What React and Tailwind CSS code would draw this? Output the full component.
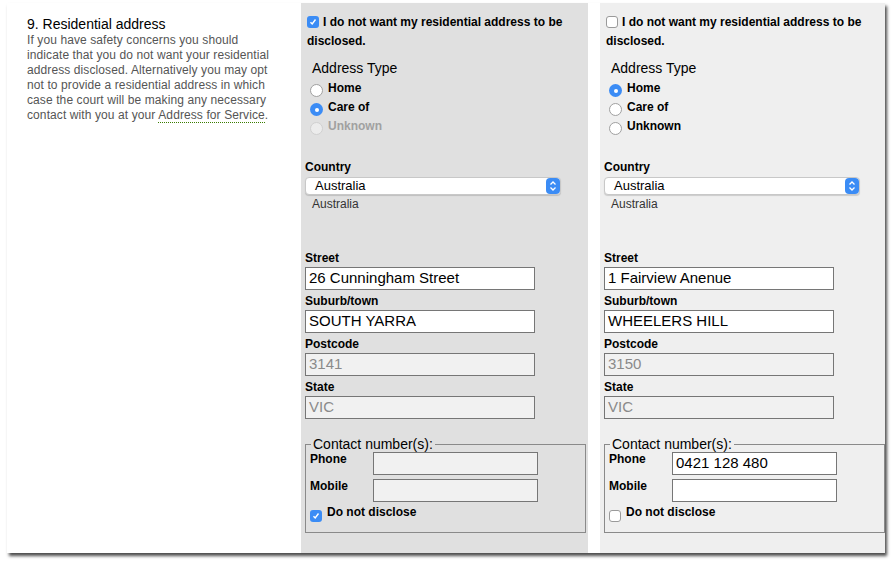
const F = { fontFamily: '"Liberation Sans", Arial, sans-serif' };

function Check({ on }) {
  return on ? (
    <span className="flex w-[12px] h-[12px] rounded-[3px] bg-[#3b8cf5] items-center justify-center shrink-0">
      <svg width="8" height="8" viewBox="0 0 8 8"><path d="M1.5 4.2 L3.2 6 L6.5 1.5" stroke="white" strokeWidth="1.4" fill="none" /></svg>
    </span>
  ) : (
    <span className="block w-[12px] h-[12px] rounded-[3px] bg-white border border-[#9a9a9a] shrink-0" />
  );
}

function Radio({ on, dim }) {
  return on ? (
    <span className="flex w-[13px] h-[13px] rounded-full bg-[#3b8cf5] items-center justify-center shrink-0">
      <span className="block w-[4px] h-[4px] rounded-full bg-white" />
    </span>
  ) : (
    <span className={`block w-[13px] h-[13px] rounded-full border shrink-0 ${dim ? "border-[#d0d0d0] bg-[#ececec]" : "border-[#a0a0a0] bg-white"}`} />
  );
}

function Input({ value, dis, w = "w-[230px]" }) {
  return (
    <div className={`${w} h-[23px] shrink-0 border border-[#767676] flex items-center px-[3px] text-[15px] ${dis ? "bg-[#f1f1f1] text-[#8a8a8a]" : "bg-white text-black"}`}>{value}</div>
  );
}

function Panel({ bg, checked, type, street, suburb, post, phone, disabled }) {
  const lbl = "text-[12px] font-bold text-black leading-[14px]";
  return (
    <div className={`${bg} flex flex-col pl-[4px] pt-[10px] pr-[3px]`}>
      <div className="text-[12px] font-bold leading-[19px] pl-[2px]">
        <span className="inline-block align-middle mr-[4px] relative top-[-1px]"><Check on={checked} /></span>
        I do not want my residential address to be disclosed.
      </div>
      <div className="text-[14px] mt-[8px] ml-[7px] leading-[18px]">Address Type</div>
      <div className="flex flex-col ml-[5px] mt-[2px]">
        {[["Home", type === 0], ["Care of", type === 1], ["Unknown", false, disabled]].map(([t, on, dim]) => (
          <div key={t} className="flex items-start gap-[5px] h-[19px]">
            <div className="mt-[5px]"><Radio on={on} dim={dim} /></div>
            <span className={`text-[12px] font-bold leading-[18px] ${dim ? "text-[#a0a0a0]" : ""}`}>{t}</span>
          </div>
        ))}
      </div>
      <div className={`${lbl} mt-[24px]`}>Country</div>
      <div className="w-[256px] h-[18px] mt-[3px] bg-white rounded-[4px] border border-[#c8c8c8] flex items-center justify-between pl-[9px] text-[13px] shadow-[0_1px_1px_rgba(0,0,0,0.15)]">
        Australia
        <span className="w-[14px] h-[16px] rounded-[4px] bg-[#3b8cf5] flex items-center justify-center">
          <svg width="8" height="12" viewBox="0 0 8 12"><path d="M1.5 4.5 L4 2 L6.5 4.5 M1.5 7.5 L4 10 L6.5 7.5" stroke="white" strokeWidth="1.3" fill="none" /></svg>
        </span>
      </div>
      <div className="text-[12px] text-[#333] ml-[7px] mt-[2px] leading-[14px]">Australia</div>
      <div className={`${lbl} mt-[40px]`}>Street</div>
      <div className="mt-[2px]"><Input value={street} /></div>
      <div className={`${lbl} mt-[4px]`}>Suburb/town</div>
      <div className="mt-[2px]"><Input value={suburb} /></div>
      <div className={`${lbl} mt-[4px]`}>Postcode</div>
      <div className="mt-[2px]"><Input value={post} dis /></div>
      <div className={`${lbl} mt-[4px]`}>State</div>
      <div className="mt-[2px]"><Input value="VIC" dis /></div>
      <fieldset className="mt-[17px] border border-[#8a8a8a] pl-[4px] pr-[6px] pb-[10px] pt-0 w-[281px]">
        <legend className="text-[14px] px-[2px] ml-[1px] leading-[16px]">Contact number(s):</legend>
        <div className="flex mt-[0px]">
          <span className={`${lbl} w-[63px]`}>Phone</span>
          <Input value={phone} dis={disabled} w="w-[165px]" />
        </div>
        <div className="flex mt-[4px]">
          <span className={`${lbl} w-[63px]`}>Mobile</span>
          <Input value="" dis={disabled} w="w-[165px]" />
        </div>
        <div className="flex items-start gap-[5px] mt-[2px]">
          <div className="mt-[6px]"><Check on={checked} /></div>
          <span className="text-[12px] font-bold leading-[16px]">Do not disclose</span>
        </div>
      </fieldset>
    </div>
  );
}

export default function App() {
  return (
    <div style={F} className="w-[892px] h-[565px] bg-white text-black">
      <div className="ml-[7px] mt-[3px] w-[878px] h-[550px] bg-white shadow-[2px_3px_3px_rgba(0,0,0,0.7)] grid grid-cols-[294px_287px_12px_285px] overflow-hidden">
        <div className="pl-[20px] pt-[13px] pr-[24px]">
          <div className="text-[14px] leading-[16px]">9. Residential address</div>
          <div className="text-[12px] text-[#555] leading-[15px] mt-[1px] tracking-[0.1px]">
            If you have safety concerns you should indicate that you do not want your residential address disclosed. Alternatively you may opt not to provide a residential address in which case the court will be making any necessary contact with you at your <span className="border-b border-dotted border-[#3a7d00]">Address for Service</span>.
          </div>
        </div>
        <Panel bg="bg-[#e0e0e0]" checked type={1} street="26 Cunningham Street" suburb="SOUTH YARRA" post="3141" phone="" disabled />
        <div />
        <Panel bg="bg-[#efefef]" checked={false} type={0} street="1 Fairview Anenue" suburb="WHEELERS HILL" post="3150" phone="0421 128 480" />
      </div>
    </div>
  );
}
